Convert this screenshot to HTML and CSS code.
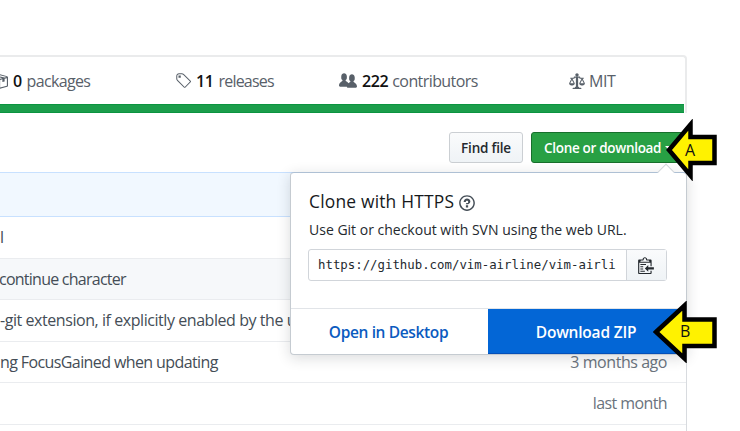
FILE: index.html
```html
<!DOCTYPE html>
<html lang="en">
<head>
<meta charset="utf-8">
<title>vim-airline</title>
<link rel="stylesheet" href="styles.css">
</head>
<body>
<div class="page">
  <section class="summary">
    <ul class="stats">
      <li class="stat packages"><svg width="18" height="18" viewBox="0 0 16 16"><path d="M1 4.732v7.47c0 .45.3.84.75.97l6.5 1.73c.16.05.34.05.5 0l6.5-1.73c.45-.13.75-.52.75-.97v-7.47c0-.45-.3-.84-.75-.97l-6.5-1.74a1.4 1.4 0 0 0-.5 0l-6.5 1.74c-.45.13-.75.52-.75.97zm7 9.09l-6-1.59v-6.77l6 1.61v6.75zm-6-9.36l2.5-.67 6.5 1.73-2.5.67L2 4.463zm13 7.77l-6 1.59v-6.75l2-.55v2.44l2-.53v-2.44l2-.53v6.77zm-2-7.24l-6.5-1.73 2-.53 6.5 1.73-2 .53z"/></svg><b>0</b><span>packages</span></li>
      <li class="stat releases"><svg width="16" height="18" viewBox="0 0 14 16"><path d="M7.73 1.73C7.26 1.26 6.62 1 5.96 1H3.5C2.13 1 1 2.13 1 3.5v2.47c0 .66.27 1.3.73 1.77l6.06 6.06c.39.39 1.02.39 1.41 0l4.59-4.59a.996.996 0 000-1.41L7.73 1.73zM2.38 7.09c-.31-.3-.47-.7-.47-1.13V3.5c0-.88.72-1.59 1.59-1.59h2.47c.42 0 .83.16 1.13.47l6.14 6.13-4.73 4.73-6.13-6.15zM3.01 3h2v2H3V3h.01z"/></svg><b>11</b><span>releases</span></li>
      <li class="stat people"><svg width="18" height="18" viewBox="0 0 16 16"><path d="M16 12.999c0 .439-.45 1-1 1H7.995c-.539 0-.994-.447-.995-.999H1c-.54 0-1-.561-1-1 0-2.634 3-4 3-4s.229-.409 0-1c-.841-.621-1.058-.59-1-3 .058-2.419 1.367-3 2.5-3s2.442.58 2.5 3c.058 2.41-.159 2.379-1 3-.229.59 0 1 0 1s1.549.711 2.42 2.088C9.196 9.369 10 8.999 10 8.999s.229-.409 0-1c-.841-.62-1.058-.59-1-3 .058-2.419 1.367-3 2.5-3s2.437.581 2.495 3c.059 2.41-.158 2.38-1 3-.229.59 0 1 0 1s3.005 1.366 3.005 4"/></svg><b>222</b><span>contributors</span></li>
      <li class="stat"><svg width="16" height="18" viewBox="0 0 14 16"><path d="M7 4c-.83 0-1.5-.67-1.5-1.5S6.17 1 7 1s1.5.67 1.5 1.5S7.83 4 7 4zm7 6c0 1.11-.89 2-2 2h-1c-1.11 0-2-.89-2-2l2-4h-1c-.55 0-1-.45-1-1H8v8c.42 0 1 .45 1 1h1c.42 0 1 .45 1 1H3c0-.55.58-1 1-1h1c0-.55.58-1 1-1h.03L6 5H5c0 .55-.45 1-1 1H3l2 4c0 1.11-.89 2-2 2H2c-1.11 0-2-.89-2-2l2-4H1V5h3c0-.55.45-1 1-1h4c.55 0 1 .45 1 1h3v1h-1l2 4zM2.5 7L1 10h3L2.5 7zM13 10l-1.5-3-1.5 3h3z"/></svg><span class="license">MIT</span></li>
    </ul>
    <div class="language"></div>
  </section>

  <div class="actions">
    <button class="btn">Find file</button>
    <div class="clone">
      <button class="btn primary"><span>Clone or download</span><i class="caret"></i></button>
      <div class="popover">
        <div class="clone-body">
          <h4><span>Clone with HTTPS</span><svg width="16" height="18" viewBox="0 0 14 16"><path d="M6 10h2v2H6v-2zm4-3.5C10 8.64 8 9 8 9H6c0-.55.45-1 1-1h.5c.28 0 .5-.22.5-.5v-1c0-.28-.22-.5-.5-.5h-1c-.28 0-.5.22-.5.5V7H4c0-1.5 1.5-3 3-3s3 1 3 2.5zM7 2.3c3.14 0 5.7 2.56 5.7 5.7s-2.56 5.7-5.7 5.7A5.71 5.71 0 011.3 8c0-3.14 2.56-5.7 5.7-5.7zM7 1C3.14 1 0 4.14 0 8s3.14 7 7 7 7-3.14 7-7-3.14-7-7-7z"/></svg></h4>
          <p>Use Git or checkout with SVN using the web URL.</p>
          <div class="url">
            <div class="field">https://github.com/vim-airline/vim-airli</div>
            <button class="copy" aria-label="Copy"><svg width="16" height="18" viewBox="0 0 14 16"><path d="M2 13h4v1H2v-1zm5-6H2v1h5V7zm2 3V8l-3 3 3 3v-2h5v-2H9zM4.500 9H2v1h2.500V9zM2 12h2.500v-1H2v1zm9 1h1v2c-.02.28-.11.52-.3.7-.19.18-.42.28-.7.3H1c-.55 0-1-.45-1-1V4c0-.55.45-1 1-1h3c0-1.110.89-2 2-2 1.110 0 2 .89 2 2h3c.55 0 1 .45 1 1v5h-1V6H1v9h10v-2zM2 5h8c0-.55-.45-1-1-1H8c-.55 0-1-.45-1-1s-.45-1-1-1-1 .45-1 1-.45 1-1 1H3c-.55 0-1 .45-1 1z"/></svg></button>
          </div>
        </div>
        <div class="choices"><a class="open">Open in Desktop</a><a class="zip">Download ZIP</a></div>
        <i class="notch"></i>
      </div>
      <div class="marker marker-a"><svg width="52" height="62" viewBox="0 0 52 62"><path d="M3 31 24.500 5.500V18H48.500V44H24.500V56.500Z"/></svg><span>A</span></div>
      <div class="marker marker-b"><svg width="66" height="62" viewBox="0 0 66 62"><path d="M3 31 31.500 4.500V18.500H61.500V45H31.500V57.500Z"/></svg><span>B</span></div>
    </div>
  </div>

  <div class="files">
    <div class="commit"></div>
    <div class="row"><span>l</span></div>
    <div class="row shaded"><span class="tight">continue character</span></div>
    <div class="row"><span>-git extension, if explicitly enabled by the user</span></div>
    <div class="row"><span class="focus">ng FocusGained when updating</span><time>3 months ago</time></div>
    <div class="row"><span></span><time class="month">last month</time></div>
    <div class="row"></div>
  </div>
</div>
</body>
</html>
```
FILE: styles.css
```css
* { box-sizing: border-box; }
body { margin: 0; background: #fff; font-family: "Open Sans", "Noto Sans", sans-serif; }
.page { width: 740px; height: 431px; overflow: hidden; padding-top: 55px; font-size: 16px; color: #444d56; letter-spacing: -.44px; }
svg { display: block; flex: none; fill: currentColor; }
.summary { width: 687px; height: 58px; border: 2px solid #eaebec; border-width: 2px 2px 0 0; border-radius: 0 4px 0 0; }
.stats { display: grid; grid-template-columns: 175px 164px 230px 1fr; height: 47px; margin: 0; padding: 0; list-style: none; }
.stat { display: flex; align-items: center; white-space: nowrap; color: #586069; }
.stat b { margin: 0 5px 0 4px; color: #111; font-weight: 600; }
.stat .license { margin-left: 4px; }
.packages { margin-left: -10px; letter-spacing: -.65px; }
.packages b { margin-left: 5px; }
.releases { letter-spacing: -.8px; }
.releases b { margin: 0 5px; letter-spacing: -.4px; }
.people { letter-spacing: -.58px; }
.people b { margin: 0 4px 0 5px; letter-spacing: -.4px; }
.language { width: 684px; height: 9px; background: #1b9d4b; border: 1px solid #0b9440; border-width: 1px 0; }
.actions { position: relative; z-index: 2; display: flex; justify-content: flex-end; gap: 8px; width: 686px; height: 59px; padding-top: 19px; }
.btn { height: 31px; border: 1px solid #cbcfd3; border-radius: 3px; padding: 0; width: 74px; font: 600 13.500px "Open Sans", sans-serif; letter-spacing: -.2px; color: #24292e; background: linear-gradient(#fafbfc, #eff3f6); white-space: nowrap; }
.clone { position: relative; width: 155px; }
.primary { display: flex; align-items: center; width: 155px; padding-left: 12px; color: #fff; background: #28a044; border-color: #176f2c; letter-spacing: -.31px; }
.caret { margin-left: 4px; border: 4px solid transparent; border-top-color: #fff; border-bottom: 0; }
.popover { position: absolute; right: -1px; top: 40px; width: 397px; height: 183px; background: #fff; border: 1px solid #c5cbd1; border-top-color: #aec0d4; border-radius: 4px; box-shadow: 0 3px 14px rgba(27,31,35,.16); color: #24292e; }
.notch { position: absolute; right: 14px; top: -7px; width: 12px; height: 12px; background: #fff; border: 1px solid #d1d5da; border-width: 1px 0 0 1px; transform: rotate(45deg); }
.clone-body { height: 135px; padding: 16px 17px 0; }
h4 { display: flex; align-items: center; gap: 5px; height: 24px; margin: 0; padding-left: 1px; font-weight: 500; font-size: 17.400px; letter-spacing: .2px; color: #16191c; }
h4 svg { color: #444d56; margin-top: 3px; }
p { margin: 6px 0 8px; padding-left: 1px; height: 22px; line-height: 22px; font-size: 14px; letter-spacing: 0; white-space: nowrap; }
.url { display: flex; width: 359px; height: 32px; border: 1px solid #d1d5da; border-radius: 3px; }
.field { width: 317px; padding-left: 9px; line-height: 30px; font-family: "DejaVu Sans Mono", monospace; font-size: 12.360px; letter-spacing: 0; white-space: nowrap; }
.copy { display: flex; align-items: center; justify-content: center; width: 40px; padding: 0 2px 0 0; border: 0; border-left: 1px solid #d1d5da; background: linear-gradient(#fafbfc, #eff3f6); color: #24292e; }
.choices { display: flex; height: 46px; border-top: 1px solid #e1e4e8; font-weight: 600; font-size: 15.500px; line-height: 47px; text-align: center; }
.choices a { color: #0b5bbf; }
.choices .open { width: 197px; padding-right: 2px; letter-spacing: -.36px; }
.choices .zip { flex: 1; padding-right: 2px; letter-spacing: -.2px; color: #fff; background: #0366d6; border-bottom: 1px solid #034fb8; }
.marker { position: absolute; color: #111; letter-spacing: 0; }
.marker svg { fill: #fff200; stroke: #000; stroke-width: 4.500; }
.marker span { position: absolute; font: 16px/20px "Open Sans", sans-serif; }
.marker-a { left: 135px; top: -13px; }
.marker-a span { left: 19px; top: 21px; }
.marker-b { left: 122px; top: 169px; }
.marker-b span { left: 27px; top: 20px; }
.files { width: 687px; border-right: 1px solid #d8dbdf; }
.commit { height: 45px; background: #f1f8ff; border: 1px solid #c8e1ff; border-width: 1px 0; }
.row { display: flex; justify-content: space-between; height: 41.500px; padding-right: 19px; line-height: 41px; border-bottom: 1px solid #eaecef; white-space: nowrap; }
.shaded { background: #f6f8fa; }
.tight { margin-left: -1px; letter-spacing: -.75px; }
.focus { letter-spacing: -.6px; }
time { color: #6a737d; letter-spacing: -.45px; }
.month { letter-spacing: -.6px; }
```
